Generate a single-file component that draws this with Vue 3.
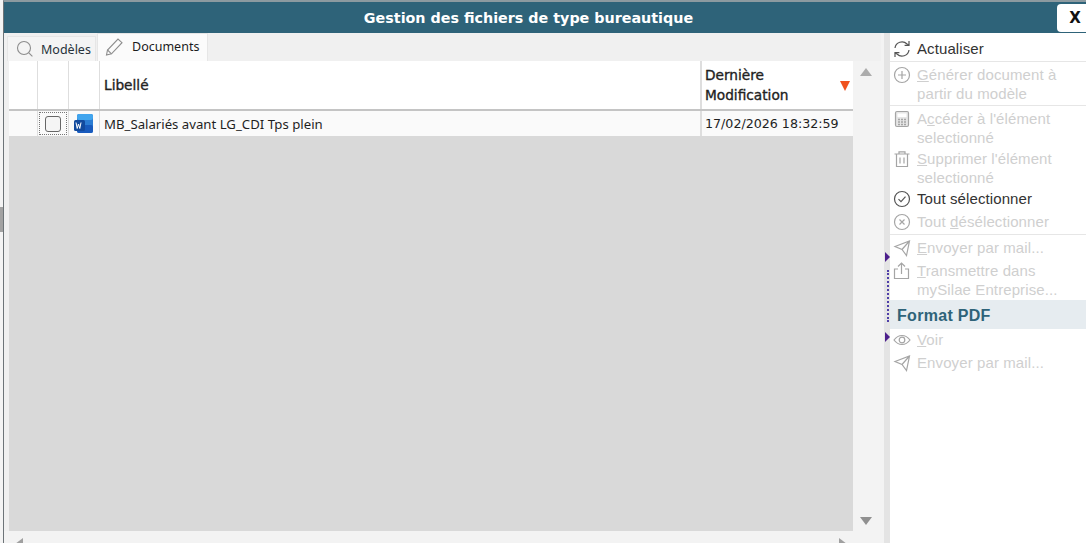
<script setup>
const columns = ['', '', '', 'Libellé', 'Dernière Modification']

// Actions of the side panel, grouped the way the separators split them
const groups = [
  [{ icon: 'refresh', label: 'Actualiser', on: true }],
  [{ icon: 'plus', pre: '', key: 'G', post: 'énérer document à', line2: 'partir du modèle' }],
  [
    { icon: 'calc', pre: 'A', key: 'c', post: 'céder à l\'élément', line2: 'selectionné' },
    { icon: 'trash', pre: '', key: 'S', post: 'upprimer l\'élément', line2: 'selectionné' },
    { icon: 'check', label: 'Tout sélectionner', on: true },
    { icon: 'cross', pre: 'Tout ', key: 'd', post: 'ésélectionner' },
  ],
  [
    { icon: 'send', pre: '', key: 'E', post: 'nvoyer par mail...' },
    { icon: 'share', pre: '', key: 'T', post: 'ransmettre dans', line2: 'mySilae Entreprise...' },
  ],
]
const pdfActions = [
  { icon: 'eye', pre: '', key: 'V', post: 'oir' },
  { icon: 'send', label: 'Envoyer par mail...' },
]
</script>

<template>
  <div class="page">
    <i class="behind"></i>
    <div class="window">
      <header class="titlebar">
        <span class="title">Gestion des fichiers de type bureautique</span>
        <button class="close">X</button>
      </header>

      <div class="body">
        <section class="main">
          <div class="tabs">
            <div class="tab">
              <svg width="18" height="18" viewBox="0 0 18 18" fill="none" stroke="#8d8d8d" stroke-width="1.1">
                <circle cx="8" cy="8" r="6.5" />
                <path d="M12.8 12.8l3.6 3.6" />
              </svg>
              Modèles
            </div>
            <div class="tab tab--active">
              <svg width="18" height="18" viewBox="0 0 18 18" fill="none" stroke="#8d8d8d" stroke-width="1.1">
                <path d="M1.500 17l1-5L13 1l4 3.700L6.500 15.800z" />
                <path d="M2.500 12l4 3.800" />
              </svg>
              Documents
            </div>
          </div>

          <div class="grid-wrap">
            <div class="grid">
              <div class="grid-head">
                <div class="cell c-a"></div>
                <div class="cell c-b"></div>
                <div class="cell c-c"></div>
                <div class="cell c-name head-text">{{ columns[3] }}</div>
                <div class="cell c-date head-text">
                  <span>Dernière<br />Modification</span>
                  <i class="sort"></i>
                </div>
              </div>
              <div class="grid-row">
                <div class="cell c-a"></div>
                <div class="cell c-b">
                  <span class="focus"><span class="checkbox"></span></span>
                </div>
                <div class="cell c-c">
                  <svg width="20" height="21" viewBox="0 0 20 21">
                    <rect x="3" y="1" width="16" height="19" rx="2" fill="#2b7cd3" />
                    <rect x="3" y="1" width="16" height="6" rx="2" fill="#41a5ee" />
                    <rect x="3" y="12" width="16" height="8" rx="2" fill="#185abd" />
                    <rect x="0" y="7" width="11" height="11" rx="1.500" fill="#124a9e" />
                    <path d="M2 9.500l1.200 6 1.300-4.500 1.300 4.500 1.200-6" fill="none" stroke="#fff" stroke-width="1" />
                  </svg>
                </div>
                <div class="cell c-name">MB_Salariés avant LG_CDI Tps plein</div>
                <div class="cell c-date date">17/02/2026 18:32:59</div>
              </div>
              <div class="grid-empty"></div>
            </div>
            <div class="vscroll">
              <i class="arrow arrow--up"></i>
              <i class="arrow arrow--down"></i>
            </div>
          </div>
          <div class="hscroll">
            <i class="arrow arrow--left"></i>
            <i class="arrow arrow--right"></i>
          </div>
        </section>

        <div class="splitter">
          <i class="grip grip--top"></i>
          <i class="dots"></i>
          <i class="grip grip--bottom"></i>
        </div>

        <aside class="side">
          <div
            v-for="(group, g) in groups"
            :key="g"
            class="group"
            :class="['group--' + g]"
          >
            <div v-for="(a, i) in group" :key="i" class="action" :class="{ 'action--on': a.on }">
              <svg class="ico" width="20" height="20" viewBox="0 0 20 20" fill="none" stroke="currentColor" stroke-width="1.2">
                <template v-if="a.icon === 'refresh'">
                  <path d="M3 9a7 7 0 0 1 12-4l2 1" />
                  <path d="M17 2v4.400h-4.400" />
                  <path d="M17 11a7 7 0 0 1-12 4l-2-1" />
                  <path d="M3 18v-4.400h4.400" />
                </template>
                <template v-else-if="a.icon === 'plus'">
                  <circle cx="10" cy="10" r="7.500" />
                  <path d="M10 6v8M6 10h8" />
                </template>
                <template v-else-if="a.icon === 'calc'">
                  <rect x="3.500" y="2.500" width="13" height="15" rx="1.500" fill="#e6e6e6" />
                  <rect x="5.500" y="4.500" width="9" height="3.500" fill="#fff" stroke="none" />
                  <path d="M6 10.500h8M6 13h8M6 15.500h8" stroke-dasharray="2 1" stroke-width="1.500" />
                </template>
                <template v-else-if="a.icon === 'trash'">
                  <path d="M2.500 5h15M7 5V2.800h6V5M4.500 5v12.500h11V5M8 8.500v6M12 8.500v6" />
                </template>
                <template v-else-if="a.icon === 'check'">
                  <circle cx="10" cy="10" r="7.500" />
                  <path d="M6.500 10.200l2.500 2.500 4.500-5" />
                </template>
                <template v-else-if="a.icon === 'cross'">
                  <circle cx="10" cy="10" r="7.500" />
                  <path d="M7.500 7.500l5 5M12.500 7.500l-5 5" />
                </template>
                <template v-else-if="a.icon === 'send'">
                  <path d="M3 8.500L17.500 3l-3 14.500-4.500-6zM10 11.500L17.500 3" />
                </template>
                <template v-else-if="a.icon === 'share'">
                  <path d="M6 8H2.500v9.500h14V8H13" />
                  <path d="M9.500 13V2M6 5.500L9.500 2 13 5.500" />
                </template>
              </svg>
              <span class="label">
                <template v-if="a.label">{{ a.label }}</template>
                <template v-else>{{ a.pre }}<u>{{ a.key }}</u>{{ a.post }}</template>
                <template v-if="a.line2"><br />{{ a.line2 }}</template>
              </span>
            </div>
          </div>

          <div class="section">Format PDF</div>
          <div class="group group--pdf">
            <div v-for="(a, i) in pdfActions" :key="i" class="action">
              <svg class="ico" width="20" height="20" viewBox="0 0 20 20" fill="none" stroke="currentColor" stroke-width="1.2">
                <template v-if="a.icon === 'eye'">
                  <path d="M2 10c2.200-3 4.800-4.500 8-4.500s5.800 1.500 8 4.500c-2.200 3-4.800 4.500-8 4.500S4.200 13 2 10z" />
                  <circle cx="10" cy="10" r="2.800" />
                </template>
                <template v-else>
                  <path d="M3 8.500L17.500 3l-3 14.500-4.500-6zM10 11.500L17.500 3" />
                </template>
              </svg>
              <span class="label">
                <template v-if="a.label">{{ a.label }}</template>
                <template v-else>{{ a.pre }}<u>{{ a.key }}</u>{{ a.post }}</template>
              </span>
            </div>
          </div>
        </aside>
      </div>
    </div>
  </div>
</template>

<style>
html, body {
  margin: 0;
  background: #fff;
  overflow: hidden;
}
</style>

<style scoped>
.page {
  width: 1086px;
  height: 543px;
  padding-left: 3px;
  box-sizing: border-box;
  overflow: hidden;
  background: #f4f4f4;
  font-family: "Noto Sans", "Liberation Sans", sans-serif;
  position: relative;
}

/* bit of the window lying behind this dialog */
.behind {
  position: absolute;
  left: 0;
  top: 207px;
  width: 3px;
  height: 25px;
  background: #a2a2a2;
}

.window {
  height: 100%;
  display: flex;
  flex-direction: column;
  border-top: 2px solid #8c9aa0;
  border-left: 1px solid #6d7478;
  box-sizing: border-box;
  background: #f0f0f0;
}

.titlebar {
  height: 31px;
  flex: none;
  background: #2e6379;
  display: flex;
  align-items: center;
  justify-content: center;
  padding-right: 33px;
  position: relative;
}

.title {
  color: #fff;
  font-family: "DejaVu Sans", sans-serif;
  font-weight: 700;
  font-size: 14.300px;
}

.close {
  position: absolute;
  right: 0;
  top: 2px;
  width: 29px;
  height: 28px;
  border: 0;
  border-radius: 4px 0 0 4px;
  background: #fff;
  color: #111;
  font: 700 15px "DejaVu Sans", sans-serif;
  padding: 0 0 0 7px;
}

.body {
  flex: 1;
  display: flex;
  min-height: 0;
}

.main {
  width: 877px;
  flex: none;
  display: flex;
  flex-direction: column;
  background: #f0f0f0;
}

.tabs {
  height: 28px;
  flex: none;
  display: flex;
  padding-left: 3px;
  align-items: flex-end;
}

.tab {
  height: 25px;
  width: 89px;
  display: flex;
  align-items: center;
  gap: 7px;
  padding-left: 8px;
  box-sizing: border-box;
  font-size: 12.500px;
  color: #26323a;
  background: #f4f4f4;
  border: 1px solid #e6e6e6;
  border-bottom: 0;
}

.tab--active {
  height: 28px;
  width: 111px;
  margin-left: 1px;
  background: #fbfbfb;
  padding-left: 7px;
  padding-bottom: 2px;
  gap: 9px;
  color: #1c1c1c;
}

.grid-wrap {
  flex: 1;
  min-height: 0;
  display: flex;
  padding-left: 5px;
}

.grid {
  width: 844px;
  flex: none;
  display: flex;
  flex-direction: column;
}

.grid-head {
  height: 50px;
  flex: none;
  display: flex;
  background: #fff;
  border-bottom: 2px solid #c4c4c4;
  box-sizing: border-box;
}

.grid-row {
  height: 25px;
  flex: none;
  display: flex;
  background: #fafafa;
  font-size: 13.200px;
  color: #1f1f1f;
}

.grid-empty {
  flex: 1;
  background: #d9d9d9;
}

.cell {
  border-right: 1px solid #dedede;
  box-sizing: border-box;
  display: flex;
  align-items: center;
}

.c-a { width: 29px; }
.c-b { width: 31px; justify-content: center; }
.c-c { width: 31px; justify-content: center; }
.c-name { width: 601px; padding-left: 4px; }
.c-date {
  width: 152px;
  padding-left: 3px;
  border-left: 1px solid #dedede;
  border-right: 0;
  position: relative;
}

.head-text {
  font-family: "DejaVu Sans", sans-serif;
  font-size: 13.700px;
  font-weight: 500;
  line-height: 20px;
  color: #222;
  -webkit-text-stroke: 0.35px #222;
}

.date {
  font-family: "DejaVu Sans", sans-serif;
  font-size: 12.650px;
}

.sort {
  position: absolute;
  right: 3px;
  top: 20px;
  border-left: 5px solid transparent;
  border-right: 5px solid transparent;
  border-top: 10px solid #f0521e;
}

.focus {
  width: 28px;
  height: 23px;
  border: 1px dotted #777;
  box-sizing: border-box;
  display: flex;
  align-items: center;
  justify-content: center;
}

.checkbox {
  width: 16px;
  height: 16px;
  border: 1.500px solid #666;
  border-radius: 3px;
  box-sizing: border-box;
  background: #f5f5f5;
}

.vscroll {
  width: 28px;
  flex: none;
  background: #f3f3f3;
  position: relative;
}

.hscroll {
  height: 12px;
  flex: none;
  position: relative;
  background: #f3f3f3;
}

.arrow {
  position: absolute;
  width: 0;
  height: 0;
}

.arrow--up {
  left: 7px;
  top: 7px;
  border-left: 6px solid transparent;
  border-right: 6px solid transparent;
  border-bottom: 8px solid #acacac;
}

.arrow--down {
  left: 7px;
  bottom: 6px;
  border-left: 6px solid transparent;
  border-right: 6px solid transparent;
  border-top: 8px solid #909090;
}

.arrow--left {
  left: 11px;
  top: 7px;
  border-top: 6px solid transparent;
  border-bottom: 6px solid transparent;
  border-right: 8px solid #a0a0a0;
}

.arrow--right {
  left: 835px;
  top: 7px;
  border-top: 6px solid transparent;
  border-bottom: 6px solid transparent;
  border-left: 8px solid #a0a0a0;
}

.splitter {
  width: 9px;
  flex: none;
  box-sizing: border-box;
  border-left: 3px solid #f3f3f3;
  background: #e4e4e4;
  position: relative;
}

.grip {
  position: absolute;
  left: 1px;
  border-top: 5px solid transparent;
  border-bottom: 5px solid transparent;
  border-left: 5px solid #4c1f8c;
}

.grip--top { top: 219px; }
.grip--bottom { top: 299px; }

.dots {
  position: absolute;
  left: 3px;
  top: 237px;
  height: 52px;
  border-left: 2px dotted #4f3fa8;
}

.side {
  flex: 1;
  background: #fff;
  font-family: "Liberation Sans", Arial, sans-serif;
  font-size: 15px;
  line-height: 19px;
  color: #cfcfcf;
}

.group {
  border-bottom: 1px solid #e6e6e6;
  padding-top: 2px;
}

.group--0 { padding-top: 5px; }
.group--1 { padding-bottom: 1px; }
.group--3,
.group--pdf {
  border-bottom: 0;
}
.group--pdf { padding-top: 0; }

.action {
  display: flex;
  gap: 5px;
  min-height: 23px;
  box-sizing: border-box;
  padding: 1px 0 1px 2px;
}

.action--on {
  color: #333;
}

.ico {
  flex: none;
  color: #a5a5a5;
}

.action--on .ico {
  color: #555;
}

.label {
  letter-spacing: 0.1px;
}

.section {
  height: 29px;
  display: flex;
  align-items: center;
  padding: 1px 0 0 7px;
  box-sizing: border-box;
  background: #e6ecf0;
  color: #2e6379;
  font-weight: 700;
  font-size: 16px;
  letter-spacing: 0.3px;
}
</style>
